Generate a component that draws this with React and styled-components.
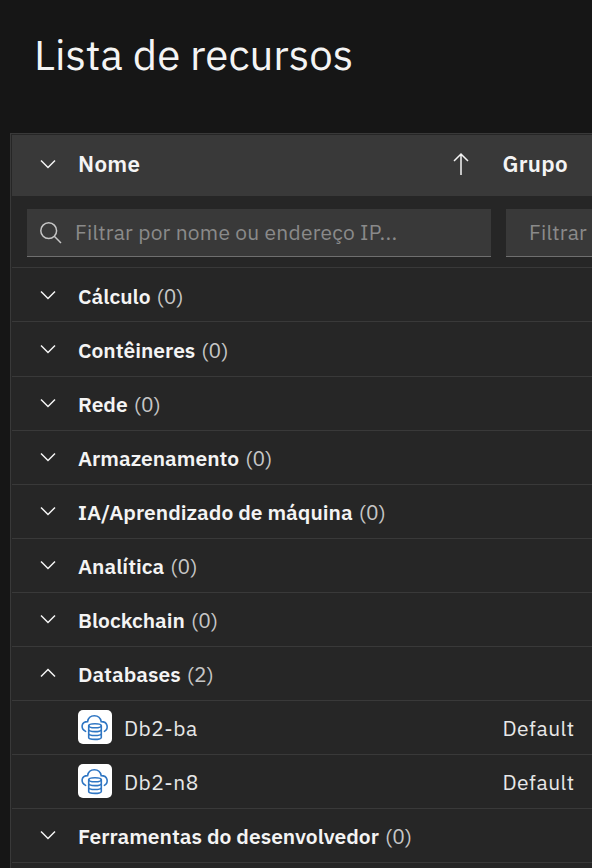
import React from "react";
import styled, { createGlobalStyle } from "styled-components";

const Global = createGlobalStyle`
  * { box-sizing: border-box; }
  body { margin: 0; background: #161616; overflow: hidden; }
`;

const Page = styled.main`
  height: 868px;
  display: flex;
  flex-direction: column;
  overflow: hidden;
  background: #161616;
  color: #f4f4f4;
  font-family: "IBM Plex Sans", Roboto, "Noto Sans", sans-serif;
  font-size: 21px;
  line-height: 28px;
  letter-spacing: 0.22px;
  white-space: nowrap;
`;

const Title = styled.h1`
  height: 133px;
  margin: 0;
  padding: 31px 0 0 34px;
  font-size: 42px;
  font-weight: 400;
  line-height: 48px;
  letter-spacing: 0;
`;

const Table = styled.section`
  flex: 1;
  margin-left: 10px;
  padding: 1px 0 0 1px;
  border-top: 1px solid #393939;
  border-left: 1px solid #393939;
  background: #262626;
`;

const Header = styled.div`
  height: 61px;
  display: flex;
  align-items: center;
  padding-bottom: 3px;
  background: #393939;
  font-size: 22.4px;
  font-weight: 600;
  letter-spacing: 0.3px;
`;

const Toggle = styled.span`
  width: 66px;
  padding-left: 27px;
  display: flex;
  flex: none;
`;

const NameColumn = styled.span`
  width: 372px;
  flex: none;
`;

const SortSlot = styled.span`
  width: 52.5px;
  flex: none;
  display: flex;
`;

const Filters = styled.div`
  height: 72px;
  display: flex;
  gap: 15px;
  padding: 13px 0 10px 15px;
  border-bottom: 1px solid #393939;
`;

const Field = styled.div`
  width: 464px;
  height: 48px;
  flex: none;
  display: flex;
  align-items: center;
  padding-left: ${(p) => p.$inset}px;
  border-bottom: 1px solid #6f6f6f;
  background: #393939;
  color: #8a8a8a;
`;

const Placeholder = styled.span`
  padding-bottom: 2px;
`;

const SearchIcon = styled.svg`
  width: 24px;
  height: 24px;
  margin-right: 12px;
`;

const Row = styled.div`
  height: ${(p) => p.$height || 54}px;
  display: flex;
  align-items: flex-start;
  padding-top: ${(p) => p.$top || 13}px;
  border-bottom: 1px solid #393939;
`;

const ChevronBox = styled(Toggle)`
  padding-top: 4px;
`;

const Label = styled.span`
  font-weight: 600;
  letter-spacing: 0;
`;

const Count = styled.span`
  margin-left: 6px;
  color: #c6c6c6;
`;

const Resource = styled.div`
  height: 54px;
  display: flex;
  align-items: center;
  padding: 0 0 2px 66px;
  border-bottom: 1px solid #393939;
  color: #e8e8e8;
  letter-spacing: 0.5px;
`;

const Badge = styled.span`
  width: 34px;
  height: 34px;
  margin-right: 12px;
  border-radius: 5px;
  background: #fff;
  display: flex;
  flex: none;
`;

const ResourceName = styled.span`
  width: 378.5px;
  flex: none;
  padding-top: 2px;
`;

const Group = styled.span`
  padding-top: 2px;
`;

const Chevron = ({ up }) => (
  <svg width="18" height="18" viewBox="0 0 18 18" fill="none" stroke="#f4f4f4" strokeWidth="1.5">
    <path d={up ? "M2 12.5 9 5.5 16 12.5" : "M2 5.5 9 12.5 16 5.5"} />
  </svg>
);

const SortArrow = () => (
  <svg width="22" height="24" viewBox="0 0 22 24" fill="none" stroke="#f4f4f4" strokeWidth="1.5">
    <path d="M11 23V2M4 9 11 2 18 9" />
  </svg>
);

const CloudDatabase = () => (
  <svg width="34" height="34" viewBox="0 0 34 34" fill="none" stroke="#2f76c3" strokeWidth="1.6" strokeLinecap="round">
    <path d="M7.6 21.4C2.2 18.6 3.2 11.6 9.6 11.6C10.8 3.8 21.8 3.8 23.2 11.6C29.8 11.6 31 18.6 26.4 21.4" />
    <ellipse cx="17" cy="15.8" rx="6.3" ry="2" />
    <path d="M10.7 15.8V27.4C10.7 30 23.3 30 23.3 27.4V15.8M10.7 19.6C10.7 22.3 23.3 22.3 23.3 19.6M10.7 23.4C10.7 26.1 23.3 26.1 23.3 23.4" />
  </svg>
);

const categories = [
  { name: "Cálculo", top: 14 },
  { name: "Contêineres", top: 14, height: 55 },
  { name: "Rede" },
  { name: "Armazenamento" },
  { name: "IA/Aprendizado de máquina" },
  { name: "Analítica" },
  { name: "Blockchain" },
  { name: "Databases", resources: ["Db2-ba", "Db2-n8"] },
  { name: "Ferramentas do desenvolvedor" },
];

const Category = ({ item }) => (
  <>
    <Row $top={item.top} $height={item.height}>
      <ChevronBox><Chevron up={Boolean(item.resources)} /></ChevronBox>
      <Label>{item.name}</Label>
      <Count>({item.resources ? item.resources.length : 0})</Count>
    </Row>
    {item.resources?.map((name) => (
      <Resource key={name}>
        <Badge><CloudDatabase /></Badge>
        <ResourceName>{name}</ResourceName>
        <Group>Default</Group>
      </Resource>
    ))}
  </>
);

export default function App() {
  return (
    <Page>
      <Global />
      <Title>Lista de recursos</Title>
      <Table>
        <Header>
          <Toggle><Chevron /></Toggle>
          <NameColumn>Nome</NameColumn>
          <SortSlot><SortArrow /></SortSlot>
          <span>Grupo</span>
        </Header>
        <Filters>
          <Field $inset={12}>
            <SearchIcon viewBox="0 0 24 24" fill="none" stroke="#c6c6c6" strokeWidth="1.5">
              <circle cx="9.7" cy="9.7" r="7.9" />
              <path d="M15.3 15.3 22 22" />
            </SearchIcon>
            <Placeholder>Filtrar por nome ou endereço IP...</Placeholder>
          </Field>
          <Field $inset={23}>
            <Placeholder>Filtrar</Placeholder>
          </Field>
        </Filters>
        {categories.map((item) => <Category key={item.name} item={item} />)}
      </Table>
    </Page>
  );
}
